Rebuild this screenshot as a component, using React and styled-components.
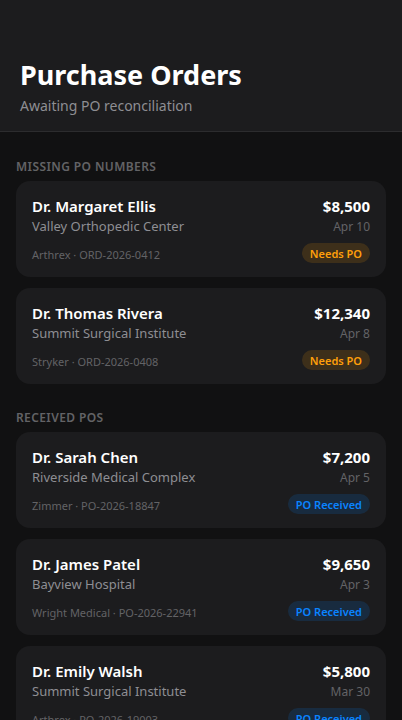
import React from "react";
import styled, { createGlobalStyle } from "styled-components";

const Global = createGlobalStyle`
  html, body { margin: 0; padding: 0; background: #111112; }
  body { font-family: "Noto Sans", "Open Sans", sans-serif; -webkit-font-smoothing: antialiased; }
  * { box-sizing: border-box; }
`;

const Page = styled.div`
  min-height: 720px;
  background: #111112;
  color: #fff;
`;

const Header = styled.header`
  background: #1c1c1e;
  border-bottom: 1px solid #2c2c2e;
  padding: 57px 20px 15px;
`;

const Title = styled.h1`
  margin: 0;
  font-size: 27px;
  line-height: 36px;
  font-weight: 700;
  color: #fff;
`;

const Subtitle = styled.p`
  margin: 3px 0 0;
  font-size: 14px;
  line-height: 20px;
  color: #8e8e93;
`;

const Body = styled.main`
  padding: 27px 16px 24px;
  display: flex;
  flex-direction: column;
  gap: 26px;
`;

const Section = styled.section`
  display: flex;
  flex-direction: column;
  gap: 6px;
`;

const SectionLabel = styled.h2`
  margin: 0;
  font-size: 12px;
  line-height: 16px;
  font-weight: 600;
  letter-spacing: 0.4px;
  text-transform: uppercase;
  color: #636366;
`;

const List = styled.div`
  display: flex;
  flex-direction: column;
  gap: 11px;
`;

const Card = styled.div`
  background: #1c1c1e;
  border-radius: 14px;
  padding: 15px 16px 14px;
  display: flex;
  flex-direction: column;
`;

const Row = styled.div`
  display: flex;
  justify-content: space-between;
  align-items: baseline;
  gap: 12px;
  height: 20px;
`;

const Name = styled.div`
  font-size: 15px;
  line-height: 20px;
  font-weight: 600;
  color: #fff;
`;

const Amount = styled.div`
  font-size: 15px;
  line-height: 20px;
  font-weight: 700;
  color: #fff;
`;

const Facility = styled.div`
  font-size: 13px;
  line-height: 20px;
  color: #8e8e93;
`;

const DateText = styled.div`
  font-size: 12px;
  line-height: 20px;
  color: #636366;
`;

const MetaRow = styled(Row)`
  margin-top: 7px;
  align-items: center;
`;

const Meta = styled.div`
  font-size: 11px;
  line-height: 16px;
  padding-top: 4px;
  color: #636366;
`;

const Badge = styled.span`
  display: inline-flex;
  align-items: center;
  height: 20px;
  padding: 0 8px;
  border-radius: 10px;
  font-size: 11px;
  font-weight: 600;
  color: ${(p) => (p.$tone === "blue" ? "#0a84ff" : "#ff9f0a")};
  background: ${(p) =>
    p.$tone === "blue" ? "rgba(10,132,255,0.15)" : "rgba(255,159,10,0.15)"};
`;

const missing = [
  { name: "Dr. Margaret Ellis", facility: "Valley Orthopedic Center", amount: "$8,500", date: "Apr 10", meta: "Arthrex · ORD-2026-0412" },
  { name: "Dr. Thomas Rivera", facility: "Summit Surgical Institute", amount: "$12,340", date: "Apr 8", meta: "Stryker · ORD-2026-0408" },
];

const received = [
  { name: "Dr. Sarah Chen", facility: "Riverside Medical Complex", amount: "$7,200", date: "Apr 5", meta: "Zimmer · PO-2026-18847" },
  { name: "Dr. James Patel", facility: "Bayview Hospital", amount: "$9,650", date: "Apr 3", meta: "Wright Medical · PO-2026-22941" },
  { name: "Dr. Emily Walsh", facility: "Summit Surgical Institute", amount: "$5,800", date: "Mar 30", meta: "Arthrex · PO-2026-19003" },
];

function OrderCard({ o, tone, label }) {
  return (
    <Card>
      <Row>
        <Name>{o.name}</Name>
        <Amount>{o.amount}</Amount>
      </Row>
      <Row>
        <Facility>{o.facility}</Facility>
        <DateText>{o.date}</DateText>
      </Row>
      <MetaRow>
        <Meta>{o.meta}</Meta>
        <Badge $tone={tone}>{label}</Badge>
      </MetaRow>
    </Card>
  );
}

export default function App() {
  return (
    <Page>
      <Global />
      <Header>
        <Title>Purchase Orders</Title>
        <Subtitle>Awaiting PO reconciliation</Subtitle>
      </Header>
      <Body>
        <Section>
          <SectionLabel>Missing PO Numbers</SectionLabel>
          <List>
            {missing.map((o) => (
              <OrderCard key={o.meta} o={o} tone="orange" label="Needs PO" />
            ))}
          </List>
        </Section>
        <Section>
          <SectionLabel>Received POs</SectionLabel>
          <List>
            {received.map((o) => (
              <OrderCard key={o.meta} o={o} tone="blue" label="PO Received" />
            ))}
          </List>
        </Section>
      </Body>
    </Page>
  );
}
